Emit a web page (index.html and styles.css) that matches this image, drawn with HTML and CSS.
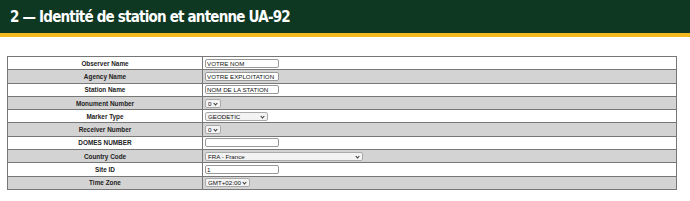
FILE: index.html
```html
<html>
  <head>
    <link rel="stylesheet" href="styles.css">
  </head>
  <body>
    <div class="banner">
      <h1>2 — Identité de station et antenne UA-92</h1>
    </div>
    <div class="content">
      <table class="ident">
        <tr>
          <td class="name">Observer Name</td>
          <td class="value"><input type="text" class="txt" value="VOTRE NOM"></td>
        </tr>
        <tr class="alt">
          <td class="name">Agency Name</td>
          <td class="value"><input type="text" class="txt" value="VOTRE EXPLOITATION"></td>
        </tr>
        <tr>
          <td class="name">Station Name</td>
          <td class="value"><input type="text" class="txt" value="NOM DE LA STATION"></td>
        </tr>
        <tr class="alt">
          <td class="name">Monument Number</td>
          <td class="value"><span class="sel"><select class="num"><option>0</option><option>1</option></select></span></td>
        </tr>
        <tr>
          <td class="name">Marker Type</td>
          <td class="value"><span class="sel"><select class="marker"><option>GEODETIC</option><option>NON_GEODETIC</option></select></span></td>
        </tr>
        <tr class="alt">
          <td class="name">Receiver Number</td>
          <td class="value"><span class="sel"><select class="num"><option>0</option><option>1</option></select></span></td>
        </tr>
        <tr>
          <td class="name">DOMES NUMBER</td>
          <td class="value"><input type="text" class="txt" value=""></td>
        </tr>
        <tr class="alt">
          <td class="name">Country Code</td>
          <td class="value"><span class="sel"><select class="country"><option>FRA - France</option></select></span></td>
        </tr>
        <tr>
          <td class="name">Site ID</td>
          <td class="value"><input type="text" class="txt" value="1"></td>
        </tr>
        <tr class="alt">
          <td class="name">Time Zone</td>
          <td class="value"><span class="sel"><select class="tz"><option>GMT+02:00</option></select></span></td>
        </tr>
      </table>
    </div>
  </body>
</html>
```

FILE: styles.css
```css
body { margin:0;background-color:#fff;font-family:"Liberation Sans", Arial, sans-serif; }
.banner { background-color:#0f3822;border-bottom:4px solid #f2b91e;height:33px;display:flex;align-items:center;padding-left:10px; }
.banner h1 { margin:0;color:#fff;font-family:"DejaVu Sans Condensed", "DejaVu Sans", sans-serif;font-stretch:condensed;font-weight:bold;font-size:15px;letter-spacing:-0.8px; }
.content { padding:19px 13px 0 7px; }
table.ident { width:100%;border-collapse:collapse;border:1px solid #666; }
table.ident td { border:1px solid #777;height:13.3px;padding:0 2px;font-size:6.4px; }
table.ident tr.alt td { background-color:#d3d3d3; }
td.name { width:190px;text-align:center;font-weight:bold;color:#222;border-right:2px solid #555; }
td.value { text-align:left; }
.txt { width:74px;height:9px;box-sizing:border-box;border:1px solid #999;border-radius:2px;padding:0 1px;font-family:"Liberation Sans", Arial, sans-serif;font-size:6.2px;color:#111;background:#fff;vertical-align:middle; }
.sel { position:relative;display:inline-block;vertical-align:middle;line-height:0; }
.sel select { appearance:none;height:9px;box-sizing:border-box;border:1px solid #aaa;border-radius:2px;padding:0 0 0 2px;font-family:"Liberation Sans", Arial, sans-serif;font-size:6.2px;color:#111;background:#f3f3f3; }
.sel::after { content:"";position:absolute;right:4px;top:3px;width:2px;height:2px;border-right:1px solid #333;border-bottom:1px solid #333;transform:rotate(45deg);pointer-events:none; }
select.num { width:16px; }
select.marker { width:63px; }
select.country { width:158px; }
select.tz { width:45px; }
```
